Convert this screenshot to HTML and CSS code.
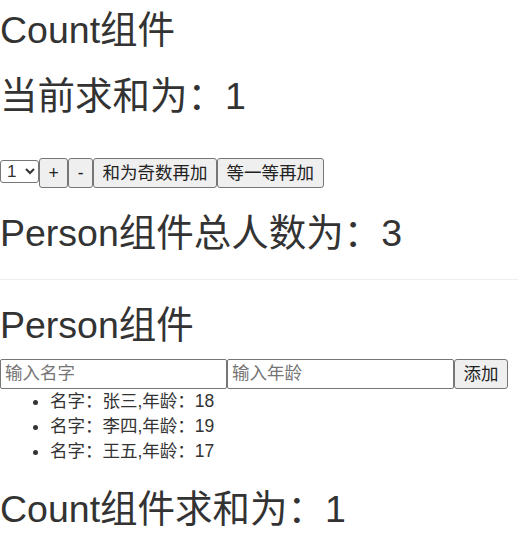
FILE: index.html
```html
<!DOCTYPE html>
<html lang="zh-CN">
<head>
<meta charset="utf-8">
<title>Count & Person</title>
<link rel="stylesheet" href="styles.css">
</head>
<body>
<div class="count">
  <h2 class="title first">Count组件</h2>
  <h2 class="title">当前求和为：1</h2>
  <div class="controls"><select class="pick"><option>1</option><option>2</option><option>3</option></select><button class="btn">+</button><button class="btn">-</button><button class="btn">和为奇数再加</button><button class="btn">等一等再加</button></div>
  <h2 class="title">Person组件总人数为：3</h2>
</div>
<hr class="divider">
<div class="person">
  <h2 class="title">Person组件</h2>
  <div class="form"><input class="field" type="text" placeholder="输入名字"><input class="field" type="text" placeholder="输入年龄"><button class="btn">添加</button></div>
  <ul class="list">
    <li>名字：张三,年龄：18</li>
    <li>名字：李四,年龄：19</li>
    <li>名字：王五,年龄：17</li>
  </ul>
  <h2 class="title">Count组件求和为：1</h2>
</div>
</body>
</html>
```

FILE: styles.css
```css
html, body {
  margin: 0;
  padding: 0;
  background: #fff;
}
body {
  font-family: "Liberation Sans", "Noto Sans CJK SC", sans-serif;
  font-size: 17.5px;
  line-height: 25px;
  color: #333;
}
.title {
  font-size: 37.5px;
  line-height: 41.25px;
  font-weight: normal;
  margin: 25px 0 12.5px;
  white-space: nowrap;
}
.title.first {
  margin-top: 10px;
}
.controls {
  display: flex;
  align-items: flex-start;
  margin-top: 40px;
}
.pick {
  margin: 2px 0 0 0;
  width: 39px;
  height: 23px;
  font-family: inherit;
  font-size: 17px;
  color: #333;
  background: #fff;
  border: 1px solid #767676;
  border-radius: 3px;
  padding: 0 0 0 2px;
}
.btn {
  margin: 0;
  font-family: inherit;
  font-size: 17.5px;
  line-height: 22px;
  color: #222;
  background: #efefef;
  border: 1px solid #767676;
  border-radius: 3px;
  padding: 3px 8.5px;
  height: 30px;
}
.divider {
  margin: 25px 0;
  border: 0;
  border-top: 1px solid #eee;
  height: 0;
}
.form {
  display: flex;
  align-items: flex-start;
}
.field {
  margin: 0;
  width: 227px;
  height: 30px;
  box-sizing: border-box;
  font-family: inherit;
  font-size: 17.5px;
  color: #333;
  border: 1px solid #767676;
  border-radius: 2px;
  padding: 0 4px;
  background: #fff;
}
.field::placeholder {
  color: #757575;
}
.list {
  margin: 0 0 12.5px;
  padding-left: 50px;
}
```
